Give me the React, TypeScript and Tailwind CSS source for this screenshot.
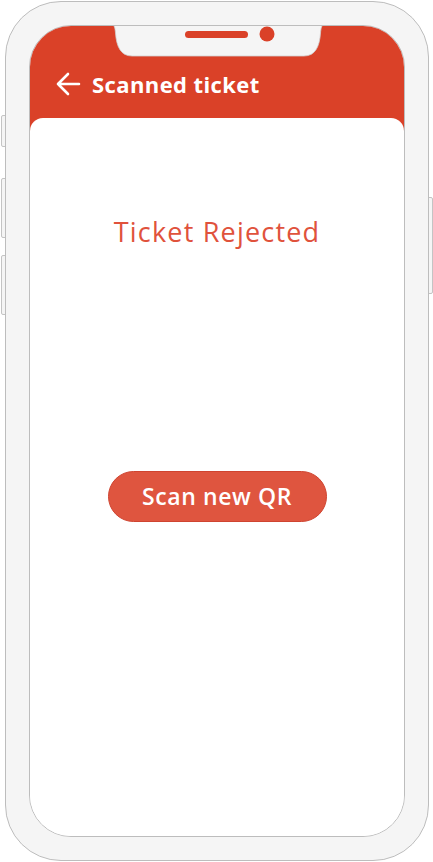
export default function App() {
  return (
    <div className="relative w-[433px] h-[862px] bg-white" style={{ fontFamily: "'Open Sans', Lato, sans-serif" }}>
      {/* side buttons */}
      <div className="absolute left-[1px] top-[115px] w-[6px] h-[32px] bg-[#f5f5f5] border border-[#c4c4c4] rounded-l-[2px]" />
      <div className="absolute left-[1px] top-[178px] w-[6px] h-[60px] bg-[#f5f5f5] border border-[#c4c4c4] rounded-l-[2px]" />
      <div className="absolute left-[1px] top-[255px] w-[6px] h-[60px] bg-[#f5f5f5] border border-[#c4c4c4] rounded-l-[2px]" />
      <div className="absolute left-[427px] top-[197px] w-[6px] h-[97px] bg-[#f5f5f5] border border-[#c4c4c4] rounded-r-[2px]" />

      {/* phone frame */}
      <div className="relative ml-[5px] pt-[1px]">
        <div className="w-[424px] h-[860px] rounded-[56px] border border-[#bdbdbd] bg-[#f5f5f5] p-[23px]">
          <div className="relative w-[376px] h-[812px] rounded-[42px] border border-[#bdbdbd] overflow-hidden bg-white flex flex-col">
            {/* header */}
            <div className="relative h-[105px] shrink-0 bg-[#da4128] flex items-start pt-[45px] pl-[25px] gap-[11px]">
              {/* notch */}
              <svg className="absolute left-[82px] top-[-1px]" width="212" height="32" viewBox="0 0 212 32">
                <path
                  d="M0 0 C2.5 0 3 3 3.5 8 C4.5 22 9 31 20 31 L192 31 C203 31 207.5 22 208.5 8 C209 3 209.5 0 212 0 Z"
                  fill="#f5f5f5"
                  stroke="#d0d0d0"
                  strokeWidth="0.8"
                />
                <rect x="73" y="6" width="63" height="7" rx="3.5" fill="#da4128" />
                <circle cx="155" cy="9" r="7.5" fill="#da4128" />
              </svg>
              <svg width="26" height="24" viewBox="0 0 26 24" fill="none" className="mt-[1px]">
                <path d="M24 12 H3 M13 2 L3 12 L13 22" stroke="white" strokeWidth="2.6" strokeLinecap="round" strokeLinejoin="round" />
              </svg>
              <span className="text-white text-[22px] font-bold leading-[26px] tracking-[0.4px]">Scanned ticket</span>
            </div>

            {/* content */}
            <div className="relative flex-1 -mt-[13px] bg-white rounded-t-[13px] flex flex-col items-center">
              <div className="mt-[98px] text-[27px] leading-[32px] tracking-[1.2px] text-[#e0523c]">Ticket Rejected</div>
              <button className="mt-[223px] w-[219px] h-[51px] rounded-full bg-[#df553f] border border-[#cf4430] text-white text-[23px] font-semibold tracking-[0.6px]">
                Scan new QR
              </button>
            </div>
          </div>
        </div>
      </div>
    </div>
  );
}
